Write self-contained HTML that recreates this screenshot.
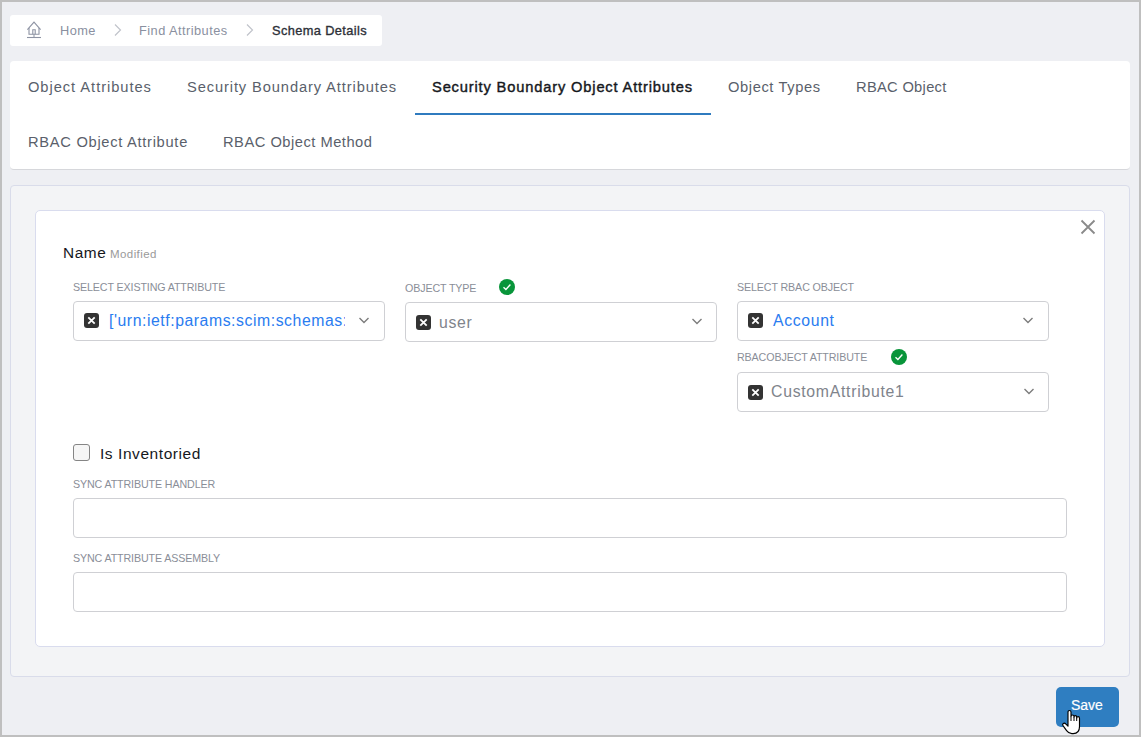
<!DOCTYPE html>
<html>
<head>
<meta charset="utf-8">
<style>
html,body{margin:0;padding:0;}
body{width:1141px;height:737px;position:relative;overflow:hidden;background:#bfbfbf;font-family:"Liberation Sans",sans-serif;}
.page{position:absolute;left:2px;top:2px;width:1137px;height:733px;background:#eeeff3;}
.a{position:absolute;white-space:nowrap;line-height:1;}
.box{position:absolute;box-sizing:border-box;}
.crumb{left:10px;top:15px;width:372px;height:31px;background:#fff;border-radius:3px;}
.tabs{left:10px;top:61px;width:1120px;height:109px;background:#fff;border-radius:4px;border-bottom:1px solid #d6d7db;}
.tab{font-size:14.7px;color:#5a5f6b;}
.uline{left:415px;top:113px;width:296px;height:2px;background:#2f7bbf;}
.outer{left:10px;top:185px;width:1120px;height:492px;background:#f3f4f6;border:1px solid #d9dcea;border-radius:4px;}
.inner{left:35px;top:210px;width:1070px;height:437px;background:#fff;border:1px solid #d9dcee;border-radius:5px;}
.lbl{font-size:10.7px;color:#8a8e98;letter-spacing:-0.12px;}
.sel{position:absolute;box-sizing:border-box;background:#fff;border:1px solid #cfd0d4;border-radius:4px;}
.xb{position:absolute;width:15px;height:15px;background:#333;border-radius:3px;}
.xb svg{position:absolute;left:0;top:0;}
.chev{position:absolute;}
.chk{position:absolute;width:16.6px;height:16.6px;}
.inp{position:absolute;box-sizing:border-box;background:#fff;border:1px solid #cfd0d4;border-radius:4px;}
.save{left:1056px;top:687px;width:63px;height:40px;background:#2f7ec1;border-radius:5px;}
</style>
</head>
<body>
<div class="page"></div>

<!-- breadcrumb -->
<div class="box crumb"></div>
<svg class="a" style="left:26px;top:20px" width="16" height="19" viewBox="0 0 16 19">
  <path d="M1.4 9.6 L8 2.2 L14.6 9.6" fill="none" stroke="#8d93a3" stroke-width="1.1"/>
  <path d="M3 8 V14.3 H13 V8" fill="none" stroke="#8d93a3" stroke-width="1.1"/>
  <path d="M6.8 14.3 V9.8 H9.2 V14.3" fill="none" stroke="#8d93a3" stroke-width="1.1"/>
  <path d="M8 14.3 V17" stroke="#8d93a3" stroke-width="1"/>
  <path d="M1 17.5 H15" stroke="#8d93a3" stroke-width="1.1"/>
</svg>
<div class="a" style="left:60px;top:25px;font-size:12.8px;color:#8a90a0;letter-spacing:0.4px;">Home</div>
<svg class="a" style="left:112.5px;top:23px" width="10" height="14" viewBox="0 0 10 14"><path d="M2 1.5 L7.5 7 L2 12.5" fill="none" stroke="#c0c3ca" stroke-width="1.15"/></svg>
<div class="a" style="left:139px;top:25px;font-size:12.8px;color:#8a90a0;letter-spacing:0.45px;">Find Attributes</div>
<svg class="a" style="left:245px;top:23px" width="10" height="14" viewBox="0 0 10 14"><path d="M2 1.5 L7.5 7 L2 12.5" fill="none" stroke="#c0c3ca" stroke-width="1.15"/></svg>
<div class="a" style="left:272px;top:25px;font-size:12.8px;color:#2d3038;-webkit-text-stroke:0.35px #2d3038;letter-spacing:0.38px;">Schema Details</div>

<!-- tabs -->
<div class="box tabs"></div>
<div class="a tab" style="left:28px;top:79.6px;letter-spacing:0.95px;">Object Attributes</div>
<div class="a tab" style="left:187px;top:79.6px;letter-spacing:0.88px;">Security Boundary Attributes</div>
<div class="a tab" style="left:432px;top:79.6px;color:#16181d;-webkit-text-stroke:0.4px #16181d;letter-spacing:0.83px;">Security Boundary Object Attributes</div>
<div class="a tab" style="left:728px;top:79.6px;letter-spacing:0.6px;">Object Types</div>
<div class="a tab" style="left:856px;top:79.6px;letter-spacing:0.3px;">RBAC Object</div>
<div class="a tab" style="left:28px;top:134.6px;letter-spacing:0.7px;">RBAC Object Attribute</div>
<div class="a tab" style="left:223px;top:134.6px;letter-spacing:0.5px;">RBAC Object Method</div>
<div class="box uline"></div>

<!-- panel -->
<div class="box outer"></div>
<div class="box inner"></div>
<svg class="a" style="left:1080px;top:219px" width="16" height="16" viewBox="0 0 16 16"><path d="M1.5 1.5 L14.5 14.5 M14.5 1.5 L1.5 14.5" stroke="#8a8a8a" stroke-width="1.8"/></svg>

<div class="a" style="left:63px;top:244.5px;font-size:15.4px;color:#16181d;letter-spacing:0.55px;">Name</div>
<div class="a" style="left:110px;top:249px;font-size:11.5px;color:#9a9a9a;letter-spacing:0.42px;">Modified</div>

<div class="a lbl" style="left:73px;top:281.7px;">SELECT EXISTING ATTRIBUTE</div>
<div class="sel" style="left:73px;top:301px;width:312px;height:40px;"></div>
<div class="xb" style="left:84px;top:313px;"><svg width="15" height="15" viewBox="0 0 15 15"><path d="M4.3 4.3 L10.7 10.7 M10.7 4.3 L4.3 10.7" stroke="#fff" stroke-width="1.8"/></svg></div>
<div class="a" style="left:109px;top:313px;width:236px;overflow:hidden;font-size:15.8px;color:#2a7cf0;letter-spacing:0.55px;">['urn:ietf:params:scim:schemas:core:2.0:User:name']</div>
<svg class="chev" style="left:358px;top:316px" width="12" height="9" viewBox="0 0 12 9"><path d="M1.5 2 L6 6.5 L10.5 2" fill="none" stroke="#7d7d7d" stroke-width="1.4"/></svg>

<div class="a lbl" style="left:405px;top:282.5px;">OBJECT TYPE</div>
<svg class="a" style="left:499px;top:279px" width="16" height="16" viewBox="0 0 16 16"><circle cx="8" cy="8" r="8" fill="#08953a"/><path d="M4.5 8.3 L6.9 10.5 L11.4 5.5" fill="none" stroke="#fff" stroke-width="1.35"/></svg>
<div class="sel" style="left:405px;top:302px;width:312px;height:40px;"></div>
<div class="xb" style="left:416px;top:315px;"><svg width="15" height="15" viewBox="0 0 15 15"><path d="M4.3 4.3 L10.7 10.7 M10.7 4.3 L4.3 10.7" stroke="#fff" stroke-width="1.8"/></svg></div>
<div class="a" style="left:439px;top:314.5px;font-size:15.8px;color:#80848c;letter-spacing:0.7px;">user</div>
<svg class="chev" style="left:691px;top:317px" width="12" height="9" viewBox="0 0 12 9"><path d="M1.5 2 L6 6.5 L10.5 2" fill="none" stroke="#7d7d7d" stroke-width="1.4"/></svg>

<div class="a lbl" style="left:737px;top:281.5px;">SELECT RBAC OBJECT</div>
<div class="sel" style="left:737px;top:301px;width:312px;height:40px;"></div>
<div class="xb" style="left:748px;top:313px;"><svg width="15" height="15" viewBox="0 0 15 15"><path d="M4.3 4.3 L10.7 10.7 M10.7 4.3 L4.3 10.7" stroke="#fff" stroke-width="1.8"/></svg></div>
<div class="a" style="left:773px;top:312.6px;font-size:15.8px;color:#2a7cf0;letter-spacing:0.65px;">Account</div>
<svg class="chev" style="left:1022px;top:316px" width="12" height="9" viewBox="0 0 12 9"><path d="M1.5 2 L6 6.5 L10.5 2" fill="none" stroke="#7d7d7d" stroke-width="1.4"/></svg>

<div class="a lbl" style="left:737px;top:351.5px;">RBACOBJECT ATTRIBUTE</div>
<svg class="a" style="left:891px;top:349px" width="16" height="16" viewBox="0 0 16 16"><circle cx="8" cy="8" r="8" fill="#08953a"/><path d="M4.5 8.3 L6.9 10.5 L11.4 5.5" fill="none" stroke="#fff" stroke-width="1.35"/></svg>
<div class="sel" style="left:737px;top:372px;width:312px;height:40px;"></div>
<div class="xb" style="left:748px;top:385px;"><svg width="15" height="15" viewBox="0 0 15 15"><path d="M4.3 4.3 L10.7 10.7 M10.7 4.3 L4.3 10.7" stroke="#fff" stroke-width="1.8"/></svg></div>
<div class="a" style="left:771px;top:383.8px;font-size:15.8px;color:#80848c;letter-spacing:0.72px;">CustomAttribute1</div>
<svg class="chev" style="left:1023px;top:387px" width="12" height="9" viewBox="0 0 12 9"><path d="M1.5 2 L6 6.5 L10.5 2" fill="none" stroke="#7d7d7d" stroke-width="1.4"/></svg>

<div class="chk" style="left:73px;top:444px;box-sizing:border-box;border:1px solid #858585;border-radius:3px;background:#f6f6f6;"></div>
<div class="a" style="left:100px;top:446px;font-size:15.5px;color:#16181d;letter-spacing:0.56px;">Is Inventoried</div>

<div class="a lbl" style="left:73px;top:478.5px;">SYNC ATTRIBUTE HANDLER</div>
<div class="inp" style="left:73px;top:498px;width:994px;height:40px;"></div>
<div class="a lbl" style="left:73px;top:552.5px;">SYNC ATTRIBUTE ASSEMBLY</div>
<div class="inp" style="left:73px;top:572px;width:994px;height:40px;"></div>

<div class="box save"></div>
<div class="a" style="left:1071px;top:698px;font-size:14px;color:#fff;-webkit-text-stroke:0.2px #fff;">Save</div>
<svg class="a" style="left:1061px;top:709px" width="20" height="26" viewBox="-1 -1 20 26">
  <path d="M6,2 Q6,0.5 7.5,0.5 Q9,0.5 9,2 L9,6.6 Q9,5 10.5,5 Q12,5 12,6.6 L12,7.2 Q12,5.6 13.3,5.6 Q14.7,5.6 14.7,7.2 L14.7,8 Q14.7,6.6 16.1,6.6 Q17.5,6.6 17.5,8.2 L17.5,16.5 Q17.5,23.6 11.2,23.6 L9.8,23.6 Q6.8,23.6 4.6,20.6 L1,15.6 Q0.1,14.2 1.3,13.4 Q2.6,12.7 4,14.2 L6,16.2 Z" fill="#fff" stroke="#000" stroke-width="1.15" stroke-linejoin="round"/>
  <path d="M9,6.6 V11 M12,7.2 V11 M14.7,8 V11" stroke="#000" stroke-width="1"/>
</svg>
</body>
</html>
